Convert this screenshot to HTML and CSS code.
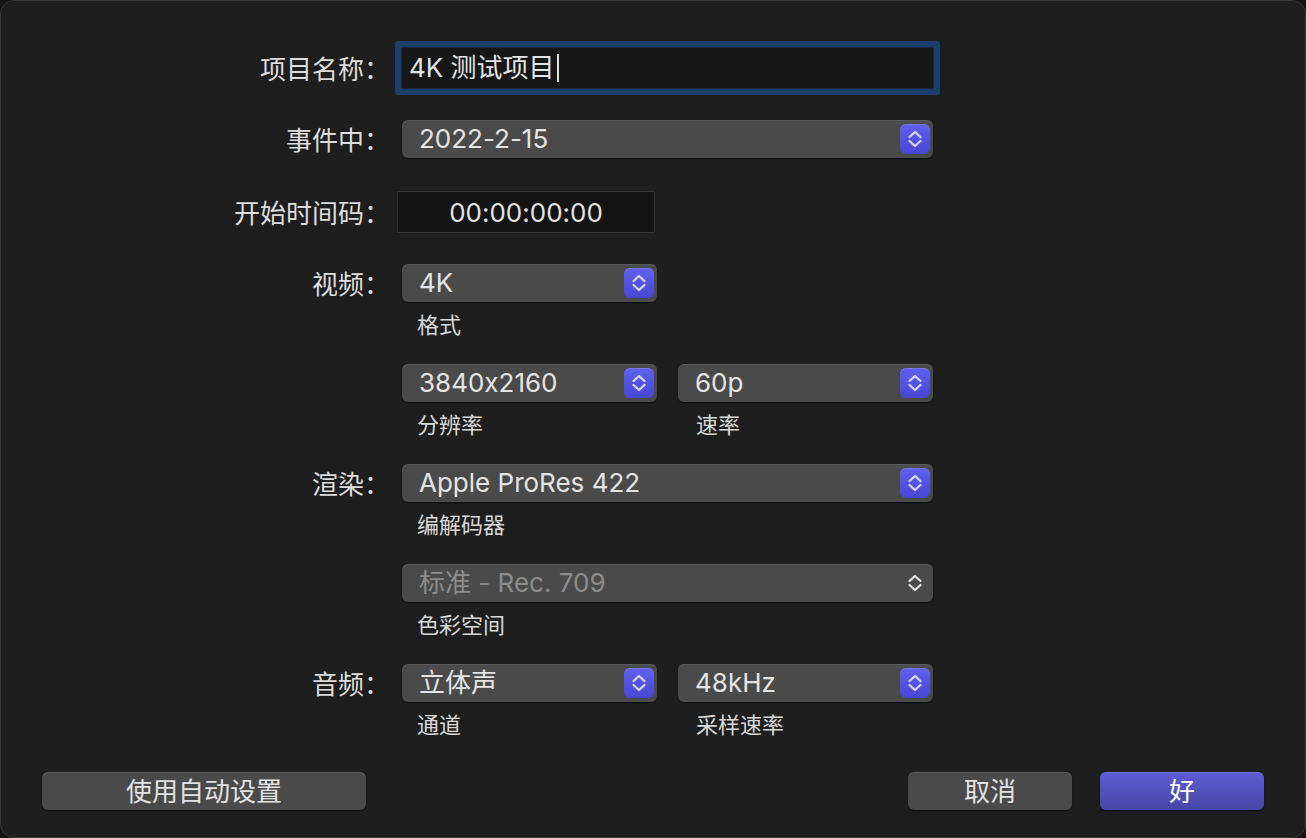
FILE: index.html
```html
<!DOCTYPE html>
<html lang="zh-CN">
<head>
<meta charset="utf-8">
<title>项目设置</title>
<link rel="stylesheet" href="styles.css">
</head>
<body>
<div class="window">
  <div class="form">
    <div class="row row-name">
      <div class="label">项目名称：</div>
      <div class="ctl">
        <div class="textfield"><span class="tf-text">4K 测试项目</span><span class="caret"></span></div>
      </div>
    </div>

    <div class="row row-event">
      <div class="label">事件中：</div>
      <div class="ctl">
        <div class="popup wide"><span class="pv">2022-2-15</span><span class="stepper"><svg viewBox="0 0 30 30" width="30" height="30"><path d="M9.5 13 L15 8 L20.5 13 M9.5 17 L15 22 L20.5 17"/></svg></span></div>
      </div>
    </div>

    <div class="row row-tc">
      <div class="label">开始时间码：</div>
      <div class="ctl">
        <div class="timecode">00:00:00:00</div>
      </div>
    </div>

    <div class="group first">
      <div class="row">
        <div class="label">视频：</div>
        <div class="ctl">
          <div class="popup half"><span class="pv">4K</span><span class="stepper"><svg viewBox="0 0 30 30" width="30" height="30"><path d="M9.5 13 L15 8 L20.5 13 M9.5 17 L15 22 L20.5 17"/></svg></span></div>
        </div>
      </div>
      <div class="captions"><span class="cap">格式</span></div>
    </div>

    <div class="group">
      <div class="row">
        <div class="label"></div>
        <div class="ctl">
          <div class="popup half"><span class="pv">3840x2160</span><span class="stepper"><svg viewBox="0 0 30 30" width="30" height="30"><path d="M9.5 13 L15 8 L20.5 13 M9.5 17 L15 22 L20.5 17"/></svg></span></div>
          <div class="popup half"><span class="pv">60p</span><span class="stepper"><svg viewBox="0 0 30 30" width="30" height="30"><path d="M9.5 13 L15 8 L20.5 13 M9.5 17 L15 22 L20.5 17"/></svg></span></div>
        </div>
      </div>
      <div class="captions"><span class="cap">分辨率</span><span class="cap">速率</span></div>
    </div>

    <div class="group">
      <div class="row">
        <div class="label">渲染：</div>
        <div class="ctl">
          <div class="popup wide"><span class="pv">Apple ProRes 422</span><span class="stepper"><svg viewBox="0 0 30 30" width="30" height="30"><path d="M9.5 13 L15 8 L20.5 13 M9.5 17 L15 22 L20.5 17"/></svg></span></div>
        </div>
      </div>
      <div class="captions"><span class="cap">编解码器</span></div>
    </div>

    <div class="group">
      <div class="row">
        <div class="label"></div>
        <div class="ctl">
          <div class="popup wide disabled"><span class="pv">标准 - Rec. 709</span><span class="stepper plain"><svg viewBox="0 0 30 30" width="30" height="30"><path d="M9.5 13 L15 8 L20.5 13 M9.5 17 L15 22 L20.5 17"/></svg></span></div>
        </div>
      </div>
      <div class="captions"><span class="cap">色彩空间</span></div>
    </div>

    <div class="group">
      <div class="row">
        <div class="label">音频：</div>
        <div class="ctl">
          <div class="popup half"><span class="pv">立体声</span><span class="stepper"><svg viewBox="0 0 30 30" width="30" height="30"><path d="M9.5 13 L15 8 L20.5 13 M9.5 17 L15 22 L20.5 17"/></svg></span></div>
          <div class="popup half"><span class="pv">48kHz</span><span class="stepper"><svg viewBox="0 0 30 30" width="30" height="30"><path d="M9.5 13 L15 8 L20.5 13 M9.5 17 L15 22 L20.5 17"/></svg></span></div>
        </div>
      </div>
      <div class="captions"><span class="cap">通道</span><span class="cap">采样速率</span></div>
    </div>
  </div>

  <div class="footer">
    <div class="btn auto">使用自动设置</div>
    <div class="spacer"></div>
    <div class="btn cancel">取消</div>
    <div class="btn primary">好</div>
  </div>
</div>
</body>
</html>
```

FILE: styles.css
```css
html, body {
  margin: 0;
  padding: 0;
}
body {
  width: 1306px;
  height: 838px;
  overflow: hidden;
  background: #131313;
  font-family: Inter, "Noto Sans CJK SC", sans-serif;
  font-feature-settings: "calt" 0;
  color: #e2e2e2;
}
.window {
  box-sizing: border-box;
  width: 1306px;
  height: 838px;
  background: #1e1e1e;
  border: 1px solid #383838;
  border-radius: 14px;
  display: flex;
  flex-direction: column;
}
.form {
  padding-top: 46px;
  display: flex;
  flex-direction: column;
}
.row {
  display: flex;
  align-items: center;
}
.label {
  width: 389px;
  flex-shrink: 0;
  text-align: right;
  font-family: "Noto Sans CJK SC", sans-serif;
  font-size: 26px;
  line-height: 30px;
  color: #dcdcdc;
}
.ctl {
  margin-left: 12px;
  display: flex;
  gap: 21px;
}
.row-name .ctl { margin-left: 11px; }
.row-event { margin-top: 31px; }
.row-tc { margin-top: 33px; }
.row-tc .ctl { margin-left: 7px; }

.textfield {
  box-sizing: border-box;
  width: 533px;
  height: 42px;
  background: #171717;
  border: 1px solid #20293a;
  border-radius: 1px;
  box-shadow: 0 0 0 6px #1c3e6b;
  display: flex;
  align-items: center;
  padding-left: 7px;
  font-size: 26px;
  line-height: 30px;
  color: #e4e4e4;
}
.caret {
  width: 2px;
  height: 28px;
  background: #e0e0e0;
  margin-left: 2px;
}
.timecode {
  box-sizing: border-box;
  width: 258px;
  height: 42px;
  background: #141414;
  border: 1px solid #363636;
  display: flex;
  align-items: center;
  justify-content: center;
  font-size: 26px;
  color: #e2e2e2;
}

.group {
  margin-top: 29px;
}
.group.first {
  margin-top: 31px;
}
.popup {
  box-sizing: border-box;
  height: 38px;
  background: #4a4a4a;
  border-radius: 6px;
  box-shadow: inset 0 1px 0 rgba(255,255,255,0.10), 0 1px 1.5px rgba(0,0,0,0.55);
  display: flex;
  align-items: center;
  padding-left: 17px;
  font-size: 26px;
  line-height: 30px;
  color: #e4e4e4;
}
.popup.wide { width: 531px; }
.popup.half { width: 255px; }
.popup.disabled { color: #8c8c8c; }
.pv { white-space: nowrap; }
.stepper {
  margin-left: auto;
  margin-right: 3px;
  width: 30px;
  height: 30px;
  border-radius: 6px;
  background: linear-gradient(#6060ef, #4747d3);
  box-shadow: inset 0 1px 0 rgba(255,255,255,0.15);
  display: flex;
}
.stepper svg path {
  fill: none;
  stroke: #d6d6ff;
  stroke-width: 2.3;
  stroke-linecap: round;
  stroke-linejoin: round;
}
.stepper.plain {
  background: none;
  box-shadow: none;
}
.stepper.plain svg path {
  stroke: #e2e2e2;
}
.captions {
  margin-top: 9px;
  margin-left: 401px;
  display: flex;
  gap: 21px;
  height: 24px;
}
.cap {
  width: 255px;
  box-sizing: border-box;
  padding-left: 15px;
  font-family: "Noto Sans CJK SC", sans-serif;
  font-size: 22px;
  line-height: 24px;
  color: #d8d8d8;
}
.cap + .cap { padding-left: 18px; }

.footer {
  margin-top: 37px;
  padding: 0 41px;
  display: flex;
  gap: 28px;
}
.spacer { flex: 1; }
.btn {
  box-sizing: border-box;
  height: 38px;
  padding-bottom: 3px;
  border-radius: 6px;
  background: #4a4a4a;
  box-shadow: inset 0 1px 0 rgba(255,255,255,0.10), 0 1px 1.5px rgba(0,0,0,0.55);
  display: flex;
  align-items: center;
  justify-content: center;
  font-family: "Noto Sans CJK SC", sans-serif;
  font-size: 26px;
  color: #e2e2e2;
}
.btn.auto { width: 324px; }
.btn.cancel { width: 164px; }
.btn.primary {
  width: 164px;
  background: linear-gradient(#5d5dd3, #4646a5);
  color: #ffffff;
}
```
